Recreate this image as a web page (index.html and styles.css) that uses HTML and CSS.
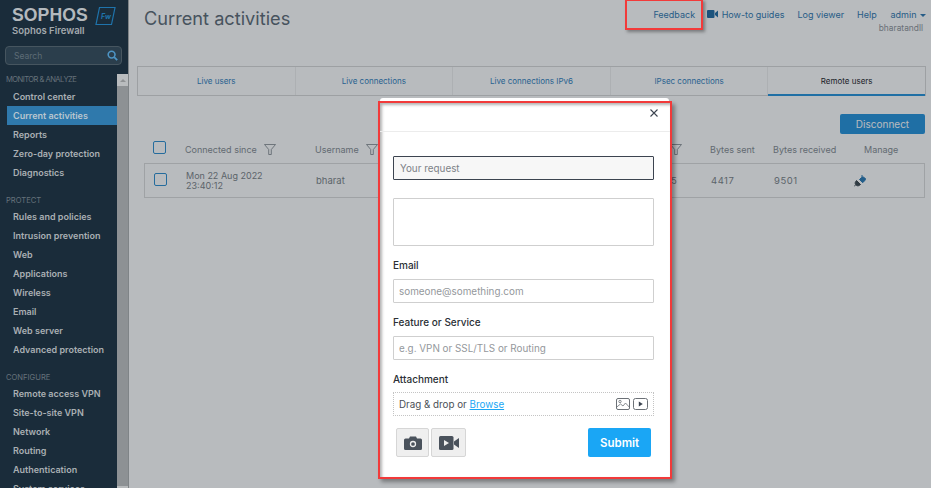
FILE: index.html
```html
<!DOCTYPE html>
<html lang="en">
<head>
    <meta charset="UTF-8">
    <title>Current activities - Sophos Firewall</title>
    <link rel="stylesheet" href="styles.css">
</head>
<body>
    <div class="sidebar">
        <div class="brand">
            <div class="brand-row">
                <span class="brand-name">SOPHOS</span>
                <svg class="brand-badge" width="21" height="20" viewBox="0 0 21 20">
                    <path d="M4.500 1.500H20L16.500 18.500H1z" fill="#1a2c3a" stroke="#1f74ac" stroke-width="1.200"/>
                    <text x="6" y="13" class="brand-fw">Fw</text>
                </svg>
            </div>
            <div class="brand-sub">Sophos Firewall</div>
        </div>
        <div class="search">
            <span>Search</span>
            <svg width="11" height="11" viewBox="0 0 11 11">
                <circle cx="4.600" cy="4.600" r="3.400" fill="none" stroke="#4d94c4" stroke-width="1.600"/>
                <path d="M7.200 7.200l3 3" stroke="#4d94c4" stroke-width="1.800"/>
            </svg>
        </div>
        <div class="nav-wrap">
            <div class="nav">
                <div class="nav-title tight">MONITOR &amp; ANALYZE</div>
                <a class="nav-item">Control center</a>
                <a class="nav-item active">Current activities</a>
                <a class="nav-item">Reports</a>
                <a class="nav-item">Zero-day protection</a>
                <a class="nav-item">Diagnostics</a>
                <div class="nav-title second">PROTECT</div>
                <a class="nav-item">Rules and policies</a>
                <a class="nav-item">Intrusion prevention</a>
                <a class="nav-item">Web</a>
                <a class="nav-item">Applications</a>
                <a class="nav-item">Wireless</a>
                <a class="nav-item">Email</a>
                <a class="nav-item">Web server</a>
                <a class="nav-item">Advanced protection</a>
                <div class="nav-title second">CONFIGURE</div>
                <a class="nav-item">Remote access VPN</a>
                <a class="nav-item">Site-to-site VPN</a>
                <a class="nav-item">Network</a>
                <a class="nav-item">Routing</a>
                <a class="nav-item">Authentication</a>
                <a class="nav-item">System services</a>
            </div>
            <div class="scrollbar">
                <div class="scroll-arrow"></div>
                <div class="scroll-thumb"></div>
            </div>
        </div>
    </div>

    <div class="main">
        <div class="topbar">
            <h1>Current activities</h1>
            <div class="top-links">
                <a>Feedback</a>
                <a class="guides">
                    <svg width="11" height="8" viewBox="0 0 11 8"><rect width="7.500" height="8" rx="1" fill="#1f6ba3"/><path d="M8 3l3-2.500v7L8 5z" fill="#1f6ba3"/></svg>
                    How-to guides
                </a>
                <a>Log viewer</a>
                <a>Help</a>
                <div class="user">
                    <a>admin <span class="caret"></span></a>
                    <span class="host">bharatandll</span>
                </div>
            </div>
        </div>

        <div class="tabs">
            <a class="tab">Live users</a>
            <a class="tab">Live connections</a>
            <a class="tab">Live connections IPv6</a>
            <a class="tab">IPsec connections</a>
            <a class="tab current">Remote users</a>
        </div>

        <div class="actions">
            <button class="disconnect">Disconnect</button>
        </div>

        <div class="table-head cols">
            <span class="check"></span>
            <span class="head-cell">Connected since
                <svg class="funnel" width="12" height="11" viewBox="0 0 12 11"><path d="M.5.5h11L7.300 5.500v5H4.700v-5z" fill="none" stroke="#7a8288" stroke-width=".8"/></svg>
            </span>
            <span class="head-cell">Username
                <svg class="funnel" width="12" height="11" viewBox="0 0 12 11"><path d="M.5.5h11L7.300 5.500v5H4.700v-5z" fill="none" stroke="#7a8288" stroke-width=".8"/></svg>
            </span>
            <svg class="funnel" width="12" height="11" viewBox="0 0 12 11"><path d="M.5.5h11L7.300 5.500v5H4.700v-5z" fill="none" stroke="#7a8288" stroke-width=".8"/></svg>
            <span>Bytes sent</span>
            <span>Bytes received</span>
            <span>Manage</span>
        </div>
        <div class="table-row cols">
            <span class="check"></span>
            <span class="since">Mon 22 Aug 2022<br>23:40:12</span>
            <span>bharat</span>
            <span class="num">5</span>
            <span class="num">4417</span>
            <span class="num">9501</span>
            <svg class="plug" width="12" height="12" viewBox="0 0 12 12">
                <path d="M0 11.500l2-2M2.500 5.500l4 4-1.500 1c-1 .6-2 .4-3-.6s-1-2-.5-3z" fill="#3d4850" stroke="#3d4850"/>
                <path d="M5.500 4.500l2-2c1-.8 2-.6 3 .2s1 2 .2 3l-2 2z" fill="#2a7ab5" stroke="#2a7ab5"/>
                <path d="M8 0v2M12 4h-2" stroke="#2a7ab5"/>
            </svg>
        </div>
    </div>

    <div class="overlay"></div>

    <div class="mark-feedback"></div>

    <div class="modal">
        <div class="modal-top">
            <svg width="8" height="8" viewBox="0 0 8 8"><path d="M.5.5l7 7M7.500.5l-7 7" stroke="#3c4450" stroke-width="1.100"/></svg>
        </div>
        <form class="modal-body">
            <input class="field request" type="text" placeholder="Your request">
            <textarea class="field details"></textarea>
            <label class="label">Email</label>
            <input class="field" type="text" placeholder="someone@something.com">
            <label class="label">Feature or Service</label>
            <input class="field" type="text" placeholder="e.g. VPN or SSL/TLS or Routing">
            <label class="label">Attachment</label>
            <div class="dropzone">
                <span>Drag &amp; drop or <a class="browse">Browse</a></span>
                <span class="drop-icons">
                    <svg width="14" height="12" viewBox="0 0 14 12"><rect x=".5" y=".5" width="13" height="11" rx="1.500" fill="none" stroke="#6b7076"/><circle cx="4" cy="3.500" r="1.200" fill="none" stroke="#6b7076" stroke-width=".8"/><path d="M.8 9l3.700-3 2.500 2 2.500-3 3.700 4" fill="none" stroke="#6b7076" stroke-width=".8"/></svg>
                    <svg width="15" height="12" viewBox="0 0 15 12"><rect x=".5" y=".5" width="14" height="11" rx="2" fill="none" stroke="#6b7076"/><path d="M5.800 3.500l4 2.500-4 2.500z" fill="#3c4450"/></svg>
                </span>
            </div>
            <div class="modal-actions">
                <button type="button" class="media cam">
                    <svg width="18" height="14" viewBox="0 0 18 14"><path d="M1.500 2.500H5L6 .5h6l1 2h3.500A1.500 1.500 0 0 1 18 4v8.500a1.500 1.500 0 0 1-1.500 1.500h-15A1.500 1.500 0 0 1 0 12.500V4a1.500 1.500 0 0 1 1.500-1.500z" fill="#4a525c"/><circle cx="9" cy="8" r="2.500" fill="none" stroke="#eee" stroke-width="1.300"/></svg>
                </button>
                <button type="button" class="media vid">
                    <svg width="20" height="14" viewBox="0 0 20 14"><rect width="14.500" height="14" rx="1.500" fill="#4a525c"/><path d="M5 4l5 3-5 3z" fill="#eee"/><path d="M15 5.500l5-3.500v10l-5-3.500z" fill="#4a525c"/></svg>
                </button>
                <button type="button" class="submit">Submit</button>
            </div>
        </form>
    </div>
</body>
</html>
```

FILE: styles.css
```css
body {
    margin: 0;
    display: flex;
    height: 488px;
    overflow: hidden;
    font-family: Inter, "Noto Sans", sans-serif;
    background-color: #fff;
    color: #444;
}
a {
    text-decoration: none;
}

/* sidebar */
.sidebar {
    position: relative;
    z-index: 4;
    width: 129px;
    flex: none;
    background-color: #1a2c3a;
    display: flex;
    flex-direction: column;
    border-right: 1px solid #7f8487;
    box-sizing: border-box;
}
.brand {
    padding: 7px 0 0 12px;
    height: 38px;
}
.brand-row {
    display: flex;
    align-items: flex-start;
    gap: 7px;
}
.brand-name {
    font-family: "Liberation Sans", sans-serif;
    font-weight: bold;
    font-size: 17.6px;
    line-height: 17px;
    letter-spacing: .1px;
    color: #b4b9bd;
}
.brand-badge {
    margin-top: -1px;
}
.brand-fw {
    font-size: 7px;
    font-style: italic;
    font-weight: bold;
    fill: #1f74ac;
}
.brand-sub {
    font-size: 9.5px;
    font-weight: 600;
    color: #a3a9ad;
    margin-top: -2px;
    line-height: 13px;
}
.search {
    margin: 1px 6px 0 5px;
    height: 19px;
    box-sizing: border-box;
    background-color: #2b3e4c;
    border: 1px solid #46555f;
    border-radius: 4px;
    display: flex;
    align-items: center;
    justify-content: space-between;
    padding: 0 3px 0 8px;
    font-size: 8.5px;
    color: #5d6c76;
}
.nav-wrap {
    display: flex;
    flex: 1;
    margin-top: 9px;
    min-height: 0;
}
.nav {
    flex: 1;
    min-width: 0;
}
.nav-title {
    padding-left: 6px;
    font-size: 7.6px;
    line-height: 11px;
    height: 13px;
    color: #66727b;
    white-space: nowrap;
}
.nav-title.tight {
    letter-spacing: -.55px;
}
.nav-title.second {
    margin-top: 13px;
    height: 12px;
}
.nav-item {
    display: block;
    height: 19px;
    line-height: 19px;
    margin-left: 7px;
    padding-left: 6px;
    font-size: 9px;
    font-weight: 600;
    color: #a9afb3;
    white-space: nowrap;
}
.nav-item.active {
    background-color: #2f79ac;
    color: #b9c6cf;
}
.scrollbar {
    width: 11px;
    flex: none;
    background-color: #b6b9bb;
}
.scroll-arrow {
    height: 12px;
    background-color: #b9bcbe;
    position: relative;
}
.scroll-arrow::after {
    content: "";
    position: absolute;
    left: 3px;
    top: 5px;
    border-left: 3px solid transparent;
    border-right: 3px solid transparent;
    border-bottom: 3px solid #8f9294;
}
.scroll-thumb {
    height: 400px;
    background-color: #8d9194;
}

/* main area */
.main {
    flex: 1;
    min-width: 0;
    background-color: #fff;
    padding-right: 5px;
}
.topbar {
    display: flex;
    justify-content: space-between;
    height: 66px;
    padding-left: 15px;
}
.topbar h1 {
    margin: 5px 0 0;
    font-size: 18.2px;
    line-height: 26px;
    font-weight: 400;
    color: #5d6b76;
}
.top-links {
    display: flex;
    gap: 13px;
    align-items: flex-start;
    padding-top: 9px;
    font-size: 9px;
    line-height: 12px;
}
.top-links a {
    color: #2f78b0;
}
.guides {
    margin-left: -1px;
}
.guides svg {
    margin-right: 1px;
}
.user {
    display: flex;
    flex-direction: column;
    align-items: flex-end;
    margin-left: -11px;
}
.host {
    color: #8f9499;
    font-size: 8.4px;
    margin: 1px 3px 0 0;
}
.caret {
    display: inline-block;
    vertical-align: middle;
    margin-left: 1px;
    border-left: 3px solid transparent;
    border-right: 3px solid transparent;
    border-top: 3px solid #2f78b0;
}
.tabs {
    display: flex;
    margin-left: 8px;
    height: 30px;
    box-sizing: border-box;
    border: 1px solid #d8d8d8;
}
.tab {
    flex: 1;
    text-align: center;
    font-size: 8px;
    line-height: 28px;
    color: #2f80bd;
    border-right: 1px solid #f0f0f0;
}
.tab.current {
    color: #1c2328;
    border-right: 0;
    border-bottom: 1px solid #2592dc;
    box-shadow: 0 1px 0 #2592dc;
}
.actions {
    display: flex;
    justify-content: flex-end;
    margin-top: 18px;
    padding-right: 1px;
}
.disconnect {
    width: 85px;
    height: 20px;
    border: 0;
    border-radius: 2px;
    background-color: #2592dc;
    color: #fff;
    font-family: inherit;
    font-size: 10px;
}
.cols {
    display: grid;
    grid-template-columns: 41px 130px 355px 40px 63px 91px 1fr;
    align-items: center;
    margin-left: 15px;
    font-size: 9px;
}
.table-head {
    height: 29px;
    box-sizing: border-box;
    padding-top: 1px;
    color: #858c92;
}
.head-cell {
    display: flex;
    align-items: center;
    gap: 7px;
}
.funnel {
    flex: none;
}
.table-row {
    height: 35px;
    box-sizing: border-box;
    border: 1px solid #dcdcdc;
    margin-right: 1px;
    color: #7c8388;
    font-size: 9.5px;
}
.since {
    font-size: 9px;
    line-height: 9.5px;
}
.num {
    letter-spacing: .5px;
}
.plug {
    margin-left: -11px;
}
.check {
    width: 11px;
    height: 11px;
    margin: 0 0 3px 9px;
    border: 1px solid #2d8fd0;
    border-radius: 2px;
}

/* dim layer and the red marks over it */
.overlay {
    position: absolute;
    left: 0;
    top: 0;
    width: 931px;
    height: 488px;
    background-color: rgba(20, 30, 40, .3);
    z-index: 3;
}
.mark-feedback {
    position: absolute;
    z-index: 5;
    left: 625px;
    top: -1px;
    width: 74px;
    height: 27px;
    border: 2px solid #f23a3a;
    box-shadow: 2px 2px 3px rgba(0, 0, 0, .35);
}
.modal {
    position: absolute;
    z-index: 5;
    left: 378px;
    top: 101px;
    width: 290px;
    height: 374px;
    background-color: #fff;
    border: 2px solid #f23a3a;
    box-shadow: 3px 3px 4px rgba(0, 0, 0, .35), inset 2px 2px 3px rgba(0, 0, 0, .3);
    display: flex;
    flex-direction: column;
}
.modal::before {
    content: "";
    position: absolute;
    left: 0;
    right: 1px;
    top: -5px;
    height: 3px;
    background-color: #fff;
    border-radius: 4px 4px 0 0;
}
.modal-top {
    height: 29px;
    flex: none;
    box-sizing: border-box;
    border-bottom: 1px solid #ececec;
    display: flex;
    justify-content: flex-end;
    padding: 6px 12px 0 0;
}
.modal-body {
    display: flex;
    flex-direction: column;
    padding: 24px 16px 0 13px;
}
.field {
    box-sizing: border-box;
    width: 261px;
    height: 24px;
    flex: none;
    border: 1px solid #cfcfcf;
    border-radius: 1px;
    padding: 0 5px;
    font-family: inherit;
    font-size: 9.9px;
    background-color: #fff;
    resize: none;
    outline: none;
}
.field::placeholder {
    color: #94989c;
}
.request {
    background-color: #f7f7f7;
    border-color: #3c4450;
    padding-left: 6px;
}
.request::placeholder {
    color: #7d8287;
}
.details {
    height: 48px;
    margin-top: 18px;
}
.label {
    font-size: 10px;
    font-weight: 500;
    color: #2a2f35;
    line-height: 13px;
    margin-top: 13px;
    margin-bottom: 7px;
}
.dropzone {
    box-sizing: border-box;
    width: 261px;
    height: 24px;
    margin-top: -1px;
    border: 1px dotted #c4c4c4;
    display: flex;
    align-items: center;
    justify-content: space-between;
    padding: 0 5px;
    font-size: 9.8px;
    color: #4a4f55;
}
.browse {
    color: #1aa6f5;
    text-decoration: underline;
}
.drop-icons {
    display: flex;
    gap: 3px;
}
.modal-actions {
    display: flex;
    gap: 2px;
    height: 29px;
    margin-top: 12px;
    padding: 0 3px;
}
.media {
    box-sizing: border-box;
    padding: 0;
    display: flex;
    align-items: center;
    justify-content: center;
    background-color: #efefef;
    border: 1px solid #d6d6d6;
    border-radius: 2px;
}
.cam {
    width: 33px;
}
.vid {
    width: 35px;
}
.submit {
    margin-left: auto;
    width: 63px;
    border: 0;
    border-radius: 2px;
    background-color: #1aa6f5;
    color: #fff;
    font-family: inherit;
    font-size: 11.5px;
    font-weight: 600;
}
```
